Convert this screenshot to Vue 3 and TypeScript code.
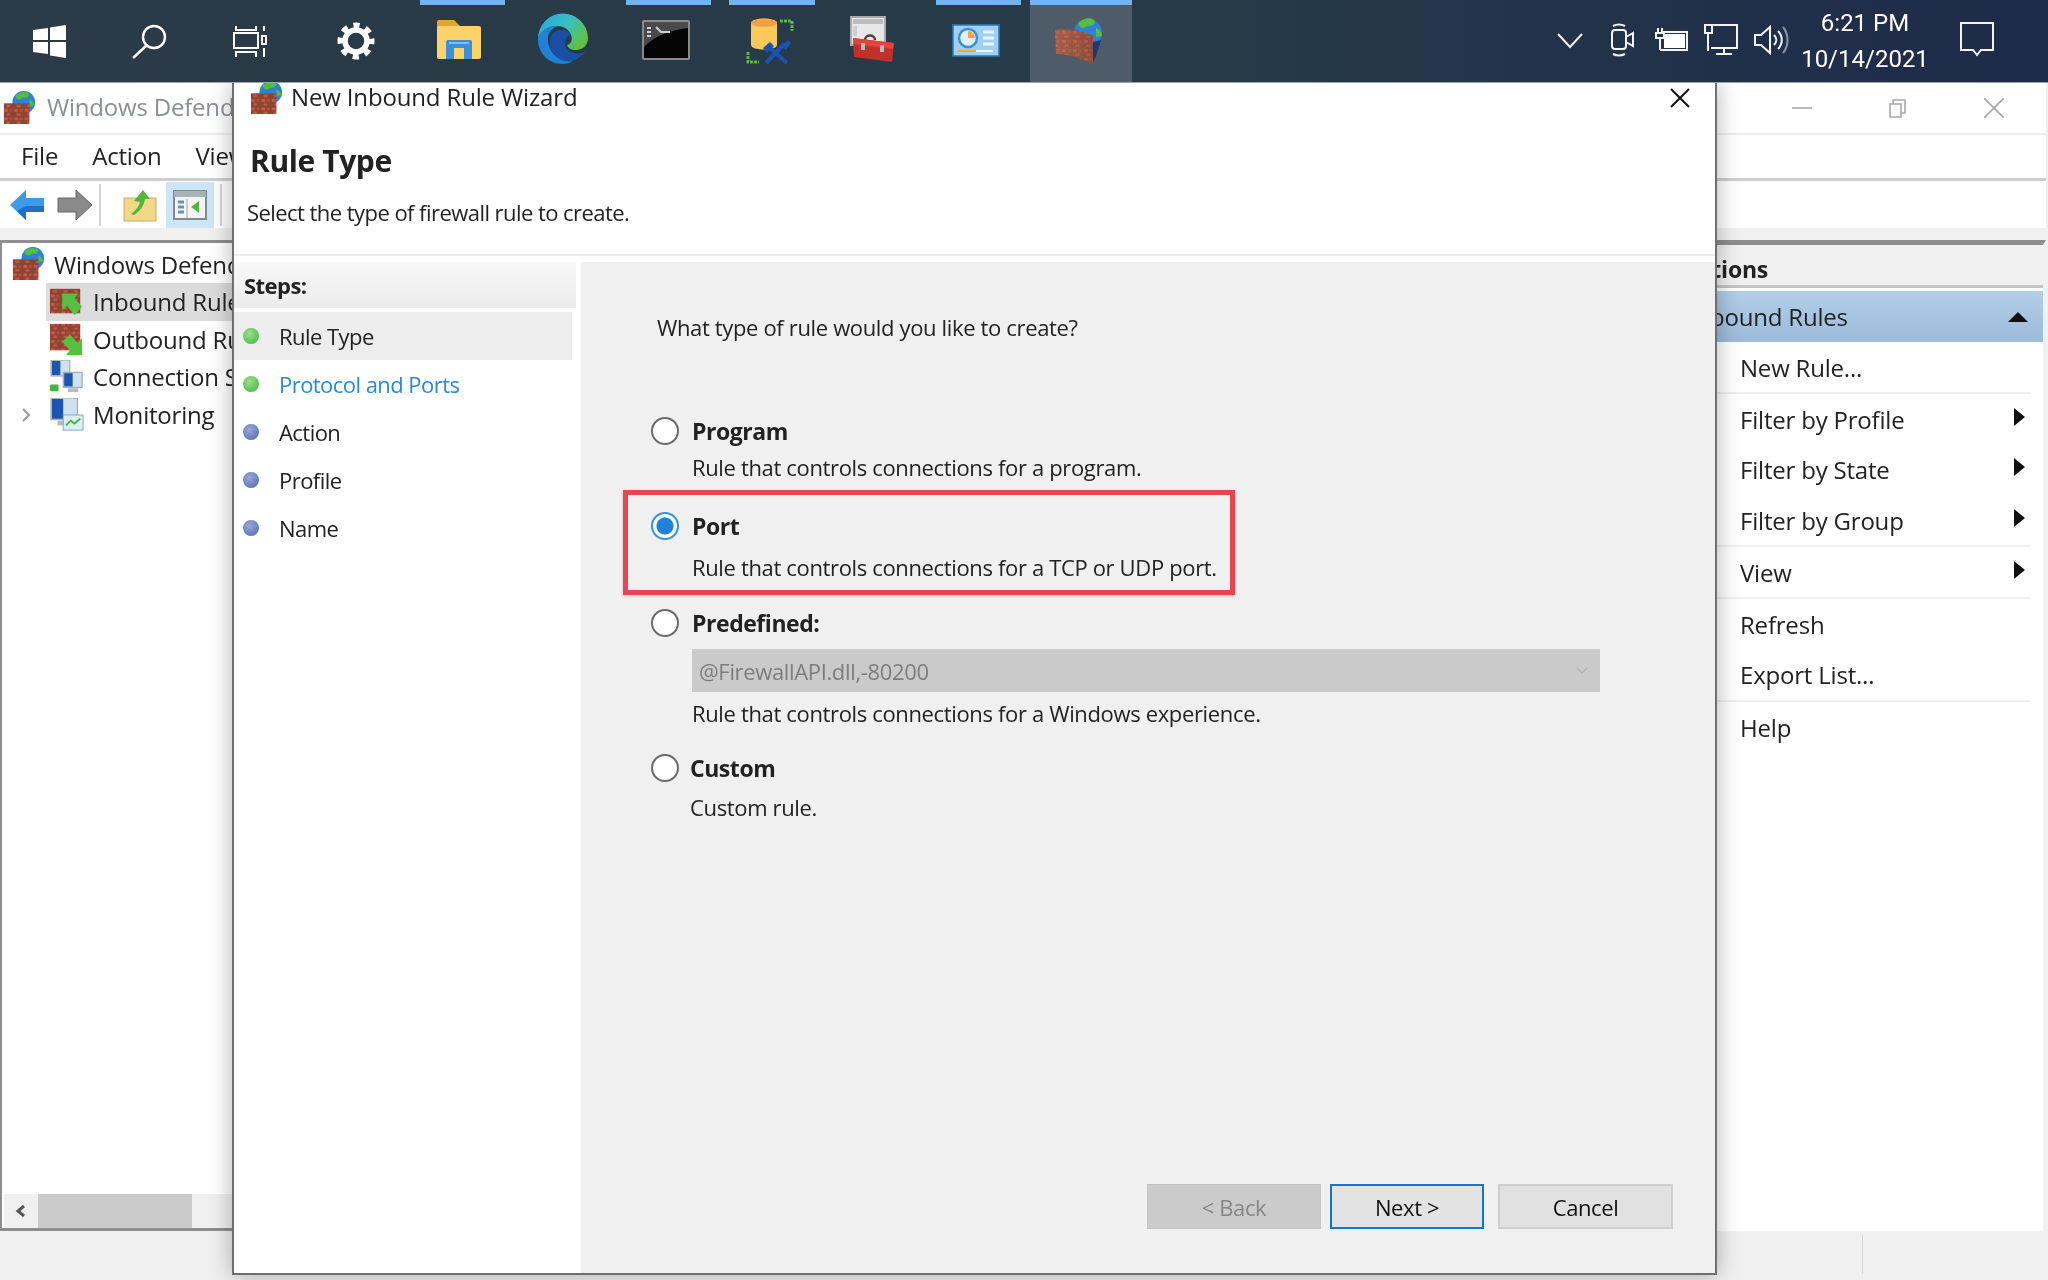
<script setup lang="ts">
interface TaskItem {
  icon: string;
  running?: boolean;
  active?: boolean;
}

interface ActionItem {
  label: string;
  submenu?: boolean;
  divider?: boolean;
}

const taskItems: TaskItem[] = [
  { icon: "i-start" },
  { icon: "i-search" },
  { icon: "i-taskview" },
  { icon: "i-gear" },
  { icon: "i-folder", running: true },
  { icon: "i-edge" },
  { icon: "i-term", running: true },
  { icon: "i-tool", running: true },
  { icon: "i-toolbox" },
  { icon: "i-panel", running: true },
  { icon: "i-firewall", running: true, active: true },
];

const treeItems = [
  { label: "Inbound Rules", icon: "i-inbound", selected: true },
  { label: "Outbound Rules", icon: "i-outbound" },
  { label: "Connection Security Rules", icon: "i-connect" },
  { label: "Monitoring", icon: "i-monitor", expandable: true },
];

const steps = [
  { label: "Rule Type", done: true, current: true },
  { label: "Protocol and Ports", done: true, link: true },
  { label: "Action" },
  { label: "Profile" },
  { label: "Name" },
];

const actions: ActionItem[] = [
  { label: "New Rule...", divider: true },
  { label: "Filter by Profile", submenu: true },
  { label: "Filter by State", submenu: true },
  { label: "Filter by Group", submenu: true, divider: true },
  { label: "View", submenu: true, divider: true },
  { label: "Refresh" },
  { label: "Export List...", divider: true },
  { label: "Help" },
];
</script>

<template>
  <div class="desktop">
    <svg class="defs" width="0" height="0" aria-hidden="true">
      <defs>
        <linearGradient id="edgeTop" x1="0" y1="0" x2="1" y2="0.6">
          <stop offset="0" stop-color="#2aa3ea" />
          <stop offset="0.55" stop-color="#38c0c0" />
          <stop offset="1" stop-color="#62c040" />
        </linearGradient>
        <linearGradient id="brickShade" x1="0" y1="0" x2="1" y2="0">
          <stop offset="0" stop-color="#c08068" />
          <stop offset="1" stop-color="#8d5240" />
        </linearGradient>
        <pattern id="bricks" width="11" height="9" patternUnits="userSpaceOnUse">
          <rect width="11" height="9" fill="#8a4630" />
          <rect x="1" y="1" width="4" height="3" fill="#c9564a" />
          <rect x="6.5" y="1" width="3.5" height="3" fill="#b24a3e" />
          <rect x="3.5" y="5.5" width="4" height="2.5" fill="#c9564a" />
        </pattern>

        <symbol id="i-start" viewBox="0 0 56 56">
          <path d="M11 18l15-2v12H11zM28 15.6l16-2.6v15H28zM11 30h15v12l-15-2zM28 30h16v16l-16-2.6z" fill="#fff" />
        </symbol>
        <symbol id="i-search" viewBox="0 0 56 56">
          <g fill="none" stroke="#fff" stroke-width="2.4">
            <circle cx="33" cy="25" r="11" />
            <path d="M26 33L12 46" />
          </g>
        </symbol>
        <symbol id="i-taskview" viewBox="0 0 56 56">
          <g fill="none" stroke="#fff" stroke-width="2" transform="translate(-3 0)">
            <rect x="12" y="21" width="24" height="15" />
            <path d="M14 14v4h20v-4M14 45v-5h20v5M42 14v5M42 36v9" />
            <rect x="40" y="24" width="4" height="8" />
          </g>
        </symbol>
        <symbol id="i-gear" viewBox="0 0 56 56">
          <g fill="none" stroke="#fff">
            <circle cx="28" cy="29" r="11" stroke-width="5.5" />
            <circle cx="28" cy="29" r="15.5" stroke-width="6" stroke-dasharray="6.1 6.07" stroke-dashoffset="3" />
          </g>
        </symbol>
        <symbol id="i-folder" viewBox="0 0 56 56">
          <path d="M6 10a2 2 0 012-2h15l6 6v6H6z" fill="#e2a533" />
          <rect x="6" y="14" width="44" height="33" rx="2" fill="#fcd26a" />
          <path d="M15 47V30a2 2 0 012-2h22a2 2 0 012 2v17h-8V36H23v11z" fill="#3a8fd8" />
          <rect x="18" y="30" width="20" height="2" fill="#7fbde8" />
        </symbol>
        <symbol id="i-edge" viewBox="0 0 56 56">
          <path d="M3 27A25 25 0 0153 26c0 7-5 12-12 12-5 0-8-2-9-5 4-1 6-5 4-10-2-6-8-9-14-9C12 14 5 20 3 27z" fill="url(#edgeTop)" />
          <path d="M3 27c2-8 10-14 20-13-9 3-12 11-9 20 3 9 12 17 24 15-3 2-7 3-10 3C13 52 3 41 3 27z" fill="#1f82d8" />
          <path d="M36 23c-5-8-19-7-21 5-2 11 8 22 21 21 6-1 11-5 15-10-6 4-14 3-18-1-3-3-4-8-2-12 1-2 3-3 5-3z" fill="#1a4fa6" />
        </symbol>
        <symbol id="i-term" viewBox="0 0 56 56">
          <rect x="5" y="9" width="46" height="38" rx="1" fill="#050506" stroke="#8b8b8b" stroke-width="2" />
          <path d="M6 10h44v6C36 18 18 22 6 35z" fill="#4a4a4c" />
          <path d="M9 16h4M9 20h4M9 24h4M18 15l5 5h9" fill="none" stroke="#cfcfcf" stroke-width="2" />
        </symbol>
        <symbol id="i-tool" viewBox="0 0 56 56">
          <path d="M39 9h12v10" fill="none" stroke="#5fb04f" stroke-width="3" stroke-dasharray="3 1" />
          <path d="M7 40v10h11" fill="none" stroke="#5fb04f" stroke-width="3" stroke-dasharray="3 1" />
          <path d="M10 11c0-6 26-6 26 0v22c0 6-26 6-26 0z" fill="#fbc95a" />
          <path d="M10 11c0 5 26 5 26 0s-26-5-26 0z" fill="#f0a040" />
          <path d="M25 51L43 32M29 36l17 15" stroke="#1854b0" stroke-width="4" fill="none" />
          <path d="M22 36l7-6 4 4-7 7zM40 34l7-6 3 3-5 7z" fill="#1854b0" />
        </symbol>
        <symbol id="i-toolbox" viewBox="0 0 56 56">
          <rect x="7" y="5" width="34" height="28" fill="#e8e8e8" stroke="#aaa" stroke-width="2" />
          <rect x="9" y="7" width="30" height="5" fill="#bdbdbd" />
          <path d="M9 14h4v10H9z" fill="#cfcfcf" />
          <path d="M21 28c0-6 10-6 10 0" fill="none" stroke="#444" stroke-width="2.5" />
          <path d="M9 26l41 5-2 19-38-5z" fill="#c0312b" />
          <path d="M9 26l41 5-1 6L9 32z" fill="#e0443a" />
          <rect x="17" y="31" width="4" height="7" fill="#bbb" />
          <rect x="36" y="33" width="4" height="7" fill="#bbb" />
        </symbol>
        <symbol id="i-panel" viewBox="0 0 56 56">
          <rect x="5" y="13" width="46" height="31" fill="#9fd0f4" stroke="#2f78c0" stroke-width="1.5" />
          <circle cx="20" cy="26" r="9" fill="#dff0fc" stroke="#3f90d0" stroke-width="2.5" />
          <path d="M20 26v-7a7 7 0 017 7z" fill="#f0a830" />
          <path d="M35 20h11M35 26h11M35 32h11" stroke="#eaf6ff" stroke-width="3" />
          <path d="M10 39h18" stroke="#f0a830" stroke-width="2" />
          <path d="M28 39h17" stroke="#eaf6ff" stroke-width="2" />
        </symbol>
        <symbol id="i-firewall" viewBox="0 0 56 56">
          <circle cx="38" cy="21" r="14" fill="#2f80d8" />
          <path d="M28 11c5-5 13-6 16-3 3 4-3 7-7 6-3 3-7 3-9-3zM46 16c4 1 6 5 6 8l-6 1z" fill="#52c038" />
          <path d="M43 30l8-2-5 16-3 6z" fill="#1a3a70" />
          <path d="M5 18c12-2 28 1 38 6v28C31 46 18 42 6 42z" fill="url(#bricks)" />
          <path d="M5 18c12-2 28 1 38 6v28C31 46 18 42 6 42z" fill="url(#brickShade)" opacity=".45" />
        </symbol>
        <symbol id="i-wall" viewBox="0 0 36 36">
          <circle cx="22" cy="12" r="12" fill="#2f80d8" />
          <path d="M13 5c4-4 10-5 14-3 2 4-2 6-6 5-2 3-6 3-8-2zM28 9c3 1 5 4 5 6l-5 1z" fill="#52c038" />
          <rect x="1" y="13" width="27" height="22" fill="url(#bricks)" />
        </symbol>
        <symbol id="i-inbound" viewBox="0 0 36 36">
          <rect x="0" y="4" width="32" height="26" fill="url(#bricks)" />
          <path d="M13 9h17l-4 5 8 9-8 9-8-10-5 5z" fill="#56c040" />
        </symbol>
        <symbol id="i-outbound" viewBox="0 0 36 36">
          <rect x="0" y="2" width="32" height="28" fill="url(#bricks)" />
          <path d="M34 35H17l4-5-8-9 8-8 8 9 5-5z" fill="#56c040" />
        </symbol>
        <symbol id="i-connect" viewBox="0 0 36 36">
          <rect x="1" y="0" width="20" height="17" fill="#cfe0ee" stroke="#999" />
          <path d="M2 1h9v15H2z" fill="#1a55b0" />
          <rect x="14" y="13" width="20" height="16" fill="#cfe0ee" stroke="#999" />
          <path d="M15 14h9v14h-9z" fill="#1a55b0" />
          <rect x="19" y="30" width="11" height="4" fill="#bbb" />
          <rect x="0" y="26" width="9" height="7" rx="1" fill="#3fb83a" />
        </symbol>
        <symbol id="i-monitor" viewBox="0 0 36 36">
          <rect x="1" y="0" width="28" height="23" fill="#cfe0ee" stroke="#999" />
          <path d="M2 1h12v21H2z" fill="#1a55b0" />
          <rect x="8" y="24" width="14" height="5" fill="#bbb" />
          <rect x="14" y="18" width="21" height="16" fill="#dcecf8" stroke="#7ea8c8" />
          <path d="M17 29l5-5 4 3 6-5" fill="none" stroke="#3fb83a" stroke-width="2" />
        </symbol>
      </defs>
    </svg>

    <header class="taskbar">
      <div
        v-for="item in taskItems"
        :key="item.icon"
        class="task"
        :class="{ running: item.running, active: item.active }"
      >
        <svg class="task-icon"><use :href="'#' + item.icon" /></svg>
      </div>

      <div class="tray">
        <svg class="tray-icon chevron" viewBox="0 0 28 28">
          <path d="M2 8l12 13L26 8" />
        </svg>
        <svg class="tray-icon cam" viewBox="0 0 28 34">
          <rect x="4" y="7" width="14" height="19" rx="3" />
          <path d="M18 14l7-4v13l-7-4M5 3c4-2 8-2 12 0M5 31c4 2 8 2 12 0" />
        </svg>
        <svg class="tray-icon batt" viewBox="0 0 36 28">
          <path d="M5 2v5M9 2v5M3 7h8v5H3zM7 12v12M10 6h24v18H7" />
          <rect x="11" y="8" width="21" height="14" class="solid" />
        </svg>
        <svg class="tray-icon net" viewBox="0 0 36 36">
          <path d="M8 3h26v23H8M21 26v6M13 32h16" />
          <rect x="2" y="3" width="7" height="8" />
          <path d="M5 11v18" />
        </svg>
        <svg class="tray-icon vol" viewBox="0 0 36 32">
          <path d="M2 11h6l9-8v26l-9-8H2zM21 11c3 3 3 7 0 10M25 7c5 5 5 13 0 18" />
          <path d="M30 3c6 7 6 19 0 26" class="faint" />
        </svg>
        <div class="clock">
          <span>6:21 PM</span>
          <span>10/14/2021</span>
        </div>
        <svg class="tray-icon notify" viewBox="0 0 38 38">
          <path d="M3 2h32v27H23l-4 5-4-5H3z" />
        </svg>
      </div>
    </header>

    <!-- console window behind the wizard -->
    <section class="console">
      <div class="console-title">
        <svg class="small-icon"><use href="#i-wall" /></svg>
        <span class="title-text">Windows Defender Firewall with Advanced Security</span>
        <div class="window-ctrls">
          <svg viewBox="0 0 20 20"><path d="M0 10h20" /></svg>
          <svg viewBox="0 0 20 20"><path d="M2 6h11v13H2zM5 6V2h12v13h-4" /></svg>
          <svg viewBox="0 0 20 20"><path d="M0 0l20 20M20 0L0 20" /></svg>
        </div>
      </div>
      <nav class="console-menu">
        <div class="menu-items">
          <span>File</span>
          <span>Action</span>
          <span>View</span>
        </div>
      </nav>
      <div class="console-tools">
        <svg class="tool" viewBox="0 0 36 32">
          <path d="M1 16L17 1v8h18v14H17v8z" fill="#3c9ae8" />
          <path d="M17 17h18v6H17v8L8 22z" fill="#1f6fc4" />
        </svg>
        <svg class="tool tool-next" viewBox="0 0 36 32">
          <path d="M35 16L19 1v8H1v14h18v8z" fill="#8a8a8a" stroke="#666" />
        </svg>
        <i class="tool-sep"></i>
        <svg class="tool tool-up" viewBox="0 0 34 34">
          <path d="M1 10h32v23H1z" fill="#f2d888" stroke="#c8a860" />
          <path d="M8 26c4-3 8-7 9-12l-6-1L20 2l7 9-5 0c-1 7-5 12-11 16z" fill="#52b83c" />
        </svg>
        <div class="tool-toggle">
          <svg viewBox="0 0 34 30">
            <rect x="1" y="1" width="32" height="28" fill="#f4f4f4" stroke="#7f8a94" stroke-width="2" />
            <rect x="1" y="1" width="32" height="6" fill="#a8b0b8" />
            <path d="M5 12h6M5 17h6M5 22h6" stroke="#6a90b8" stroke-width="3" />
            <path d="M14 9v19" stroke="#9aa4ac" />
            <path d="M26 11v12l-8-6z" fill="#52b83c" />
          </svg>
        </div>
        <i class="tool-sep"></i>
      </div>

      <div class="console-body">
        <aside class="tree">
          <div class="tree-list">
            <div class="tree-root">
              <svg class="small-icon"><use href="#i-wall" /></svg>
              <span>Windows Defender Firewall</span>
            </div>
            <div
              v-for="item in treeItems"
              :key="item.label"
              class="tree-row"
              :class="{ selected: item.selected }"
            >
              <svg v-if="item.expandable" class="twist" viewBox="0 0 10 16">
                <path d="M2 2l6 6-6 6" />
              </svg>
              <svg class="small-icon"><use :href="'#' + item.icon" /></svg>
              <span>{{ item.label }}</span>
            </div>
          </div>
          <div class="hscroll">
            <svg viewBox="0 0 12 14"><path d="M9 2L3 7l6 5" /></svg>
            <div class="hscroll-thumb"></div>
          </div>
        </aside>

        <aside class="actions">
          <h3>Actions</h3>
          <div class="actions-group">
            <span>Inbound Rules</span>
            <i class="caret-up"></i>
          </div>
          <div
            v-for="action in actions"
            :key="action.label"
            class="action"
            :class="{ divided: action.divider }"
          >
            <span>{{ action.label }}</span>
            <i v-if="action.submenu" class="caret-right"></i>
          </div>
        </aside>
      </div>
      <footer class="console-status"><i></i></footer>
    </section>

    <!-- wizard dialog -->
    <section class="wizard">
      <div class="wizard-head">
        <div class="wizard-title">
          <svg class="small-icon"><use href="#i-wall" /></svg>
          <span>New Inbound Rule Wizard</span>
          <svg class="wizard-close" viewBox="0 0 20 20"><path d="M1 1l18 18M19 1L1 19" /></svg>
        </div>
        <h1>Rule Type</h1>
        <p>Select the type of firewall rule to create.</p>
      </div>

      <div class="wizard-body">
        <div class="steps">
          <h2>Steps:</h2>
          <ul>
            <li
              v-for="step in steps"
              :key="step.label"
              :class="{ current: step.current, link: step.link }"
            >
              <i class="dot" :class="{ done: step.done }"></i>
              <span>{{ step.label }}</span>
            </li>
          </ul>
        </div>

        <div class="form">
          <p class="question">What type of rule would you like to create?</p>

          <div class="option opt-program">
            <i class="radio"></i>
            <div>
              <strong>Program</strong>
              <p>Rule that controls connections for a program.</p>
            </div>
          </div>

          <div class="option opt-port">
            <i class="radio checked"></i>
            <div>
              <strong>Port</strong>
              <p>Rule that controls connections for a TCP or UDP port.</p>
            </div>
            <div class="callout"></div>
          </div>

          <div class="option opt-predefined">
            <i class="radio"></i>
            <div class="grow">
              <strong>Predefined:</strong>
              <div class="combo">
                <span>@FirewallAPI.dll,-80200</span>
                <svg viewBox="0 0 12 8"><path d="M1 1l5 5 5-5" /></svg>
              </div>
              <p>Rule that controls connections for a Windows experience.</p>
            </div>
          </div>

          <div class="option opt-custom">
            <i class="radio"></i>
            <div>
              <strong>Custom</strong>
              <p>Custom rule.</p>
            </div>
          </div>

          <div class="buttons">
            <button class="btn back" disabled>&lt; Back</button>
            <button class="btn next">Next &gt;</button>
            <button class="btn cancel">Cancel</button>
          </div>
        </div>
      </div>
    </section>
  </div>
</template>

<style>
html,
body {
  margin: 0;
  background: #f0f0f0;
}
</style>

<style scoped>
.desktop {
  position: relative;
  width: 2048px;
  height: 1280px;
  overflow: hidden;
  font-family: "Open Sans", "Liberation Sans", sans-serif;
  color: #222;
  filter: blur(0.5px);
}

.defs {
  position: absolute;
}

.small-icon {
  width: 34px;
  height: 34px;
  flex: none;
}

/* taskbar */
.taskbar {
  position: relative;
  z-index: 3;
  display: flex;
  height: 83px;
  background: linear-gradient(90deg, #2b3b47, #263a48 60%, #1e2a4a);
  border-bottom: 1px solid #9aa5ad;
  box-sizing: border-box;
}

.task {
  position: relative;
  flex: none;
  width: 103.3px;
  display: flex;
  justify-content: center;
  padding-top: 12px;
  box-sizing: border-box;
}

.task:first-child {
  width: 100.7px;
}

.task.running::before {
  content: "";
  position: absolute;
  top: 0;
  left: 9px;
  right: 9px;
  height: 5px;
  background: #74b4ee;
}

.task.active {
  width: 102px;
  background: #4e5b69;
}

.task.active::before {
  left: 0;
  right: 0;
}

.task-icon {
  width: 56px;
  height: 56px;
  margin-left: -6px;
}

.task:first-child .task-icon {
  margin-left: 0;
}

.tray {
  margin-left: auto;
  display: flex;
  align-items: center;
  padding: 0 52px 0 0;
  height: 80px;
}

.tray-icon {
  fill: none;
  stroke: #f2f4f6;
  stroke-width: 2;
}

.tray-icon .solid {
  fill: #fff;
  stroke: none;
}

.tray-icon .faint {
  stroke: #8a96a6;
}

.chevron {
  width: 28px;
  height: 28px;
  margin-right: 24px;
}

.cam {
  width: 28px;
  height: 34px;
  margin-right: 17px;
}

.batt {
  width: 36px;
  height: 28px;
  margin-right: 14px;
}

.net {
  width: 36px;
  height: 36px;
  margin-right: 14px;
}

.vol {
  width: 36px;
  height: 32px;
}

.clock {
  display: flex;
  flex-direction: column;
  align-items: center;
  gap: 9px;
  width: 128px;
  margin: 3px 29px 0 12px;
  font-family: Roboto, sans-serif;
  font-size: 24px;
  line-height: 27px;
  color: #fff;
}

.notify {
  width: 38px;
  height: 38px;
}

/* console window */
.console {
  position: absolute;
  left: 0;
  top: 83px;
  width: 2046px;
  height: 1195px;
  display: flex;
  flex-direction: column;
  background: #f0f0f0;
  font-size: 24px;
  letter-spacing: -0.2px;
}

.console-title {
  display: flex;
  align-items: center;
  gap: 10px;
  height: 50px;
  padding-left: 3px;
  color: #8a8f96;
  background: #fff;
  border-bottom: 2px solid #eee;
  white-space: nowrap;
}

.title-text {
  flex: 0 0 185px;
  overflow: hidden;
  margin-top: -3px;
}

.window-ctrls {
  display: flex;
  gap: 76px;
  margin-left: auto;
  margin-right: 42px;
}

.window-ctrls svg {
  width: 20px;
  height: 20px;
  fill: none;
  stroke: #a8a8a8;
  stroke-width: 1.6;
}

.console-menu {
  height: 43px;
  background: #fff;
  border-bottom: 3px solid #cfcfcf;
}

.menu-items {
  display: flex;
  gap: 34px;
  width: 211px;
  height: 41px;
  align-items: center;
  padding-left: 21px;
  overflow: hidden;
  white-space: nowrap;
}

.console-tools {
  display: flex;
  align-items: center;
  height: 47px;
  padding-left: 9px;
  background: #fff;
}

.tool {
  width: 36px;
  height: 32px;
}

.tool-next {
  margin-left: 12px;
}

.tool-sep {
  width: 2px;
  height: 42px;
  background: #d4d4d4;
  margin: 0 14px 0 6px;
}

.tool-up {
  width: 34px;
  height: 34px;
  margin-left: 8px;
}

.tool-toggle {
  display: flex;
  align-items: center;
  justify-content: center;
  width: 48px;
  height: 46px;
  margin-left: 9px;
  background: #cde6f7;
}

.tool-toggle svg {
  width: 34px;
  height: 30px;
}

.console-body {
  flex: 1;
  display: flex;
  justify-content: space-between;
  min-height: 0;
  margin-top: 12px;
}

.tree {
  width: 232px;
  display: flex;
  flex-direction: column;
  background: #fff;
  border: solid #8e8e8e;
  border-width: 3px 0 3px 2px;
  box-sizing: border-box;
  white-space: nowrap;
  overflow: hidden;
}

.tree-list {
  flex: 1;
  padding-top: 2px;
}

.tree-root {
  display: flex;
  align-items: center;
  gap: 8px;
  height: 38px;
  padding-left: 10px;
}

.tree-row {
  position: relative;
  display: flex;
  align-items: center;
  gap: 9px;
  height: 37.6px;
  margin-left: 44px;
  padding-left: 4px;
}

.tree-row.selected {
  background: #dcdcdc;
}

.twist {
  position: absolute;
  left: -25px;
  top: 11px;
  width: 10px;
  height: 16px;
  fill: none;
  stroke: #9a9a9a;
  stroke-width: 2;
}

.hscroll {
  display: flex;
  align-items: center;
  height: 34px;
  background: #f0f0f0;
  margin-left: 2px;
}

.hscroll svg {
  width: 12px;
  height: 14px;
  margin: 0 11px;
  fill: none;
  stroke: #555;
  stroke-width: 3;
}

.hscroll-thumb {
  width: 154px;
  height: 34px;
  background: #cbcbcb;
}

.actions {
  width: 330px;
  border-top: 5px solid #8e8e8e;
  border-right: 3px solid #f0f0f0;
  background: #fff;
  box-sizing: border-box;
  white-space: nowrap;
  overflow: hidden;
}

.actions h3 {
  margin: 0;
  height: 43px;
  padding-top: 7px;
  box-sizing: border-box;
  line-height: 34px;
  font-size: 23px;
  font-weight: 700;
  text-indent: -32px;
  background: #f0f0f0;
  border-bottom: 3px solid #c4c4c4;
}

.actions-group {
  display: flex;
  align-items: center;
  justify-content: space-between;
  height: 51px;
  margin-top: 3px;
  padding: 0 15px 0 0;
  background: linear-gradient(#b2cee8, #9cbadb);
}

.actions-group span {
  margin-left: -27px;
}

.caret-up {
  width: 0;
  height: 0;
  border: solid transparent;
  border-width: 0 10px 10px;
  border-bottom-color: #111;
}

.action {
  display: flex;
  align-items: center;
  justify-content: space-between;
  height: 50.3px;
  margin-right: 12px;
  padding-left: 24px;
  padding-right: 6px;
}

.action:first-of-type {
  margin-top: 1px;
}

.action.divided {
  border-bottom: 2px solid #f0f0f0;
}

.caret-right {
  width: 0;
  height: 0;
  border: solid transparent;
  border-width: 9px 0 9px 11px;
  border-left-color: #111;
  margin-bottom: 5px;
}

.console-status {
  height: 47px;
  background: #f0f0f0;
  position: relative;
}

.console-status i {
  position: absolute;
  left: 1862px;
  top: 4px;
  bottom: 4px;
  width: 1px;
  background: #d8d8d8;
}

/* wizard */
.wizard {
  position: absolute;
  z-index: 2;
  left: 232px;
  top: 83px;
  width: 1485px;
  height: 1192px;
  display: flex;
  flex-direction: column;
  box-sizing: border-box;
  border: solid #6f6f6f;
  border-width: 0 2px 2px;
  background: #fff;
  box-shadow: 0 0 22px rgba(0, 0, 0, 0.3);
  font-size: 22px;
  letter-spacing: -0.55px;
  overflow: hidden;
}

.wizard-head {
  height: 171px;
  border-bottom: 2px solid #ececec;
  flex: none;
}

.wizard-title {
  display: flex;
  align-items: center;
  gap: 7px;
  height: 30px;
  padding-left: 16px;
  font-size: 24px;
  letter-spacing: -0.15px;
}

.wizard-title span {
  margin-top: -3px;
}

.wizard-close {
  width: 20px;
  height: 20px;
  margin-left: auto;
  margin-right: 25px;
  fill: none;
  stroke: #111;
  stroke-width: 2;
}

.wizard-head h1 {
  margin: 30px 0 0 16px;
  font-size: 30px;
  line-height: 36px;
  font-weight: 700;
  letter-spacing: -0.4px;
}

.wizard-head p {
  margin: 18px 0 0 13px;
  line-height: 30px;
}

.wizard-body {
  flex: 1;
  display: flex;
  min-height: 0;
  margin-top: 6px;
}

.steps {
  width: 343px;
  flex: none;
  background: #fff;
}

.steps h2 {
  margin: 0 1px 0 0;
  height: 46px;
  line-height: 46px;
  padding-left: 10px;
  font-size: 22px;
  font-weight: 700;
  background: linear-gradient(#f8f8f8, #ececec);
}

.steps ul {
  margin: 4px 0 0;
  padding: 0;
  list-style: none;
}

.steps li {
  display: flex;
  align-items: center;
  height: 48px;
  margin-right: 5px;
  padding-left: 9px;
}

.steps li.current {
  background: #ededed;
}

.steps li.link {
  color: #2a8ad8;
}

.dot {
  width: 16px;
  height: 16px;
  margin-right: 20px;
  border-radius: 50%;
  background: radial-gradient(circle at 40% 35%, #9aa8d8, #4a68b0);
}

.dot.done {
  background: radial-gradient(circle at 40% 35%, #9ae08a, #3cb03c);
}

.form {
  flex: 1;
  display: flex;
  flex-direction: column;
  background: #f0f0f0;
  padding: 50px 90px 44px 70px;
  margin-left: 4px;
  min-width: 0;
  letter-spacing: -0.35px;
}

.question {
  margin: 0 0 74px 6px;
  line-height: 30px;
}

.option {
  position: relative;
  display: flex;
  gap: 13px;
}

.option strong {
  display: block;
  font-size: 23px;
  line-height: 30px;
  font-weight: 700;
  letter-spacing: -0.45px;
}

.option p {
  margin: 0;
  line-height: 30px;
}

.grow {
  flex: 1;
}

.radio {
  flex: none;
  width: 28px;
  height: 28px;
  margin-top: 1px;
  box-sizing: border-box;
  border-radius: 50%;
  border: 2px solid #6a6a6a;
  background: #fff;
}

.radio.checked {
  border-color: #2f93e8;
  background: radial-gradient(circle, #1f82d8 0 8px, #fff 9px);
}

.opt-program p {
  margin-top: 6px;
}

.opt-port {
  margin-top: 29px;
}

.opt-port p {
  margin-top: 11px;
}

.callout {
  position: absolute;
  left: -28px;
  top: -21px;
  width: 612px;
  height: 105px;
  box-sizing: border-box;
  border: 5px solid #e8464f;
  box-shadow: 0 1px 3px rgba(0, 0, 0, 0.2);
}

.opt-predefined {
  margin-top: 26px;
}

.combo {
  display: flex;
  align-items: center;
  justify-content: space-between;
  height: 43px;
  margin: 11px 0 6px;
  padding: 0 12px 0 7px;
  background: #cacaca;
  color: #7d7d7d;
}

.combo svg {
  width: 12px;
  height: 8px;
  fill: none;
  stroke: #b4b4b4;
  stroke-width: 1.5;
}

.opt-predefined .grow {
  margin-right: 25px;
}

.opt-custom {
  margin-top: 25px;
  gap: 11px;
}

.opt-custom p {
  margin-top: 9px;
}

.buttons {
  display: flex;
  margin-top: auto;
  margin-right: -48px;
  justify-content: flex-end;
}

.btn {
  height: 45px;
  font: inherit;
  letter-spacing: -0.4px;
  color: #111;
  box-sizing: border-box;
  padding: 0;
  border-radius: 0;
}

.btn.back {
  width: 174px;
  background: #cbcbcb;
  border: 1px solid #c4c4c4;
  color: #868686;
}

.btn.next {
  width: 154px;
  margin: 0 14px 0 9px;
  background: #e3e3e3;
  border: 2px solid #0a78d8;
}

.btn.cancel {
  width: 175px;
  background: #e1e1e1;
  border: 2px solid #cfcfcf;
}
</style>
